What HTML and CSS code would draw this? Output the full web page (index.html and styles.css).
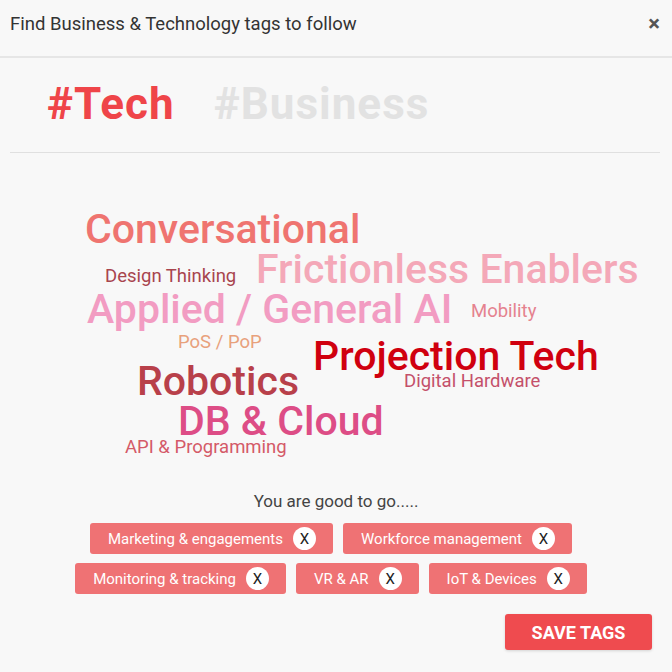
FILE: index.html
```html
<!DOCTYPE html>
<html lang="en">
<head>
  <meta charset="UTF-8">
  <meta name="viewport" content="width=device-width, initial-scale=1.0">
  <title>Find tags to follow</title>
  <link rel="stylesheet" href="styles.css">
</head>
<body>
  <div class="modal">
    <div class="modal-header">
      <h2>Find Business &amp; Technology tags to follow</h2>
      <span class="close">&times;</span>
    </div>

    <div class="tabs">
      <span class="tab active">#Tech</span>
      <span class="tab">#Business</span>
    </div>

    <div class="cloud">
      <span class="word big" style="left:85px; top:56px; color:#ef7470;">Conversational</span>
      <span class="word small" style="left:105px; top:114px; color:#a8454e;">Design Thinking</span>
      <span class="word big" style="left:256px; top:96px; color:#f4a8b8;">Frictionless Enablers</span>
      <span class="word big" style="left:87px; top:136px; color:#f29cc2;">Applied / General AI</span>
      <span class="word small" style="left:471px; top:149px; color:#e5828f;">Mobility</span>
      <span class="word small" style="left:178px; top:180px; color:#e8a17c;">PoS / PoP</span>
      <span class="word big" style="left:313px; top:183px; color:#d0000f;">Projection Tech</span>
      <span class="word big" style="left:137px; top:208px; color:#b8404a;">Robotics</span>
      <span class="word small" style="left:404px; top:219px; color:#c4506a;">Digital Hardware</span>
      <span class="word big" style="left:178px; top:248px; color:#dd4d86;">DB &amp; Cloud</span>
      <span class="word small" style="left:125px; top:285px; color:#d45a68;">API &amp; Programming</span>
    </div>

    <p class="ready">You are good to go.....</p>

    <div class="chips">
      <div class="chip-row">
        <span class="chip">Marketing &amp; engagements <b class="chip-x">X</b></span>
        <span class="chip">Workforce management <b class="chip-x">X</b></span>
      </div>
      <div class="chip-row">
        <span class="chip">Monitoring &amp; tracking <b class="chip-x">X</b></span>
        <span class="chip">VR &amp; AR <b class="chip-x">X</b></span>
        <span class="chip">IoT &amp; Devices <b class="chip-x">X</b></span>
      </div>
    </div>

    <div class="actions">
      <button class="save">SAVE TAGS</button>
    </div>
  </div>
</body>
</html>
```

FILE: styles.css
```css
body {
    margin: 0;
    background-color: #f8f8f8;
    font-family: Roboto, "Liberation Sans", sans-serif;
    color: #333333;
}

.modal {
    width: 672px;
    height: 672px;
    box-sizing: border-box;
}

.modal-header {
    display: flex;
    justify-content: space-between;
    align-items: center;
    height: 58px;
    padding: 0 12px 8px 10px;
    border-bottom: 2px solid #e6e6e6;
    box-sizing: border-box;
}

.modal-header h2 {
    margin: 0;
    font-size: 18.5px;
    font-weight: 400;
    color: #333333;
}

.close {
    font-size: 22px;
    font-weight: 700;
    color: #555555;
    line-height: 1;
}

.tabs {
    display: flex;
    gap: 39px;
    margin: 0 12px 0 10px;
    padding: 20px 0 22px 37px;
    border-bottom: 1px solid #e0e0e0;
}

.tab {
    font-size: 44px;
    font-weight: 700;
    letter-spacing: 1px;
    color: #e2e2e2;
    line-height: 52px;
}

.tab.active {
    color: #ef4549;
}

.cloud {
    position: relative;
    height: 310px;
}

.word {
    position: absolute;
    white-space: nowrap;
    line-height: 1;
    font-weight: 500;
}

.word.big {
    font-size: 41px;
}

.word.small {
    font-size: 18.5px;
    font-weight: 400;
}

.ready {
    margin: 28px 0 12px;
    text-align: center;
    font-size: 17px;
    color: #444444;
}

.chips {
    display: flex;
    flex-direction: column;
    align-items: center;
    gap: 9px;
    padding-right: 10px;
}

.chip-row {
    display: flex;
    gap: 10px;
}

.chip {
    display: flex;
    align-items: center;
    gap: 10px;
    height: 31px;
    padding: 0 17px 0 18px;
    background-color: #ef7274;
    border-radius: 3px;
    color: #ffffff;
    font-size: 15px;
}

.chip-x {
    display: flex;
    align-items: center;
    justify-content: center;
    width: 23px;
    height: 23px;
    border-radius: 50%;
    background-color: #ffffff;
    color: #222222;
    font-weight: 400;
    font-size: 15px;
}

.actions {
    display: flex;
    justify-content: flex-end;
    padding: 20px 20px 0 0;
}

.save {
    width: 147px;
    height: 36px;
    border: none;
    border-radius: 3px;
    background-color: #ef4b4f;
    color: #ffffff;
    font-family: Roboto, "Liberation Sans", sans-serif;
    font-size: 18px;
    font-weight: 700;
    box-shadow: 0 1px 3px rgba(0, 0, 0, 0.15);
}
```
